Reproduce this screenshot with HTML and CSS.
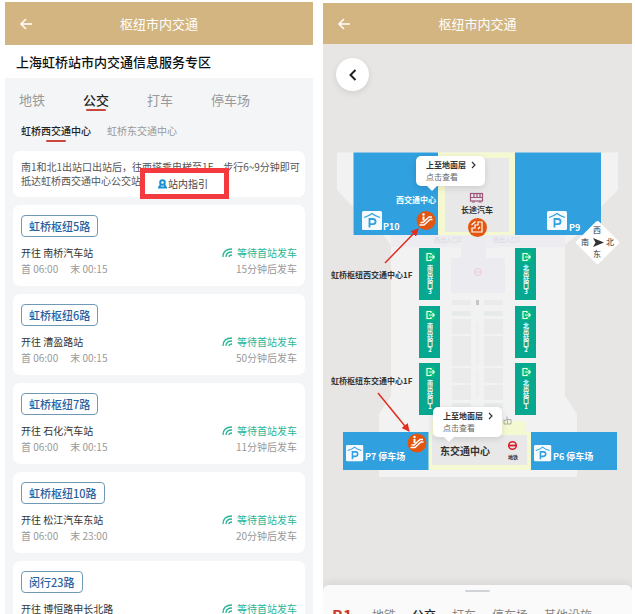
FILE: index.html
```html
<!DOCTYPE html>
<html lang="zh-CN">
<head>
    <meta charset="UTF-8">
    <meta name="viewport" content="width=device-width, initial-scale=1.0">
    <title>枢纽市内交通</title>
    <link rel="stylesheet" href="styles.css">
</head>
<body>

    <main class="page page-list">
        <header class="header">
            <button class="back" aria-label="返回">
                <svg width="14" height="14" viewBox="0 0 14 14"><path d="M13 7H2M7 2L2 7l5 5"/></svg>
            </button>
            <h1>枢纽市内交通</h1>
        </header>
        <h2 class="zone-title">上海虹桥站市内交通信息服务专区</h2>

        <div class="content">
            <nav class="tabs">
                <button>地铁</button>
                <button class="active">公交</button>
                <button>打车</button>
                <button>停车场</button>
            </nav>
            <nav class="subtabs">
                <button class="active">虹桥西交通中心</button>
                <button>虹桥东交通中心</button>
            </nav>

            <div class="card notice">
                <p>南1和北1出站口出站后，往西塔乘电梯至1F，步行6~9分钟即可<br>抵达虹桥西交通中心公交站</p>
                <a href="#map" class="guide">
                    <svg width="9" height="10" viewBox="0 0 9 10"><circle cx="4.500" cy="3.500" r="2.300"/><path d="M2.500 6L1 8.500h7L6.500 6"/></svg>
                    站内指引
                </a>
            </div>

            <section class="card route">
                <h3>虹桥枢纽5路</h3>
                <div class="row"><span>开往 南桥汽车站</span><span class="wait"><svg class="signal" viewBox="0 0 11 10"><path d="M1 9Q1 1 10 1M4 9Q4 4 10 4M7 9Q7 7 10 7"/></svg>等待首站发车</span></div>
                <div class="row time"><span class="hours"><span>首 06:00</span><span>末 00:15</span></span><span>15分钟后发车</span></div>
            </section>
            <section class="card route">
                <h3>虹桥枢纽6路</h3>
                <div class="row"><span>开往 漕盈路站</span><span class="wait"><svg class="signal" viewBox="0 0 11 10"><path d="M1 9Q1 1 10 1M4 9Q4 4 10 4M7 9Q7 7 10 7"/></svg>等待首站发车</span></div>
                <div class="row time"><span class="hours"><span>首 06:00</span><span>末 00:15</span></span><span>50分钟后发车</span></div>
            </section>
            <section class="card route">
                <h3>虹桥枢纽7路</h3>
                <div class="row"><span>开往 石化汽车站</span><span class="wait"><svg class="signal" viewBox="0 0 11 10"><path d="M1 9Q1 1 10 1M4 9Q4 4 10 4M7 9Q7 7 10 7"/></svg>等待首站发车</span></div>
                <div class="row time"><span class="hours"><span>首 06:00</span><span>末 00:15</span></span><span>11分钟后发车</span></div>
            </section>
            <section class="card route">
                <h3>虹桥枢纽10路</h3>
                <div class="row"><span>开往 松江汽车东站</span><span class="wait"><svg class="signal" viewBox="0 0 11 10"><path d="M1 9Q1 1 10 1M4 9Q4 4 10 4M7 9Q7 7 10 7"/></svg>等待首站发车</span></div>
                <div class="row time"><span class="hours"><span>首 06:00</span><span>末 23:00</span></span><span>20分钟后发车</span></div>
            </section>
            <section class="card route">
                <h3>闵行23路</h3>
                <div class="row"><span>开往 博恒路申长北路</span><span class="wait"><svg class="signal" viewBox="0 0 11 10"><path d="M1 9Q1 1 10 1M4 9Q4 4 10 4M7 9Q7 7 10 7"/></svg>等待首站发车</span></div>
            </section>
        </div>
    </main>

    <section class="page page-map" id="map">
        <header class="header">
            <button class="back" aria-label="返回">
                <svg width="14" height="14" viewBox="0 0 14 14"><path d="M13 7H2M7 2L2 7l5 5"/></svg>
            </button>
            <h1>枢纽市内交通</h1>
        </header>

        <div class="map">
            <button class="round-back" aria-label="返回地图">
                <svg width="10" height="14" viewBox="0 0 10 14"><path d="M7.500 2L2.500 7l5 5"/></svg>
            </button>
            <div class="canvas">
                <svg class="plan" width="309" height="540" viewBox="323 45 309 540">
                    <defs>
                        <g id="parking">
                            <rect width="20" height="19" rx="1.500" fill="#f4faff"/>
                            <path d="M2 6.500Q7 5 10 2.500Q13 5 18 6.500" fill="none" stroke="#31a0df" stroke-width="1.200"/>
                            <path d="M7.500 16.500V8h3.500a2.500 2.500 0 0 1 0 5.200H7.500" fill="none" stroke="#31a0df" stroke-width="1.800"/>
                        </g>
                        <g id="escalator">
                            <circle r="9.500" fill="#e2560f"/>
                            <path d="M-6.500 4.500h4.500L4-1h2.500M-5.500 2h2.500L3-3.500h3" fill="none" stroke="#fff" stroke-width="1.500"/>
                            <path d="M-2.500-4v4" stroke="#fff" stroke-width="2"/>
                            <circle cx="-2.500" cy="-6" r="1.200" fill="#fff"/>
                        </g>
                        <g id="exit">
                            <rect width="21" height="52" fill="#06a88f"/>
                            <rect x="6" y="4" width="10" height="10" rx="2" fill="#0bbd79"/>
                            <path d="M12 7V5.500H8v7h4V11M10 9h5M13.500 7.200L15.300 9l-1.800 1.800" fill="none" stroke="#e8fff5" stroke-width="1.200"/>
                        </g>
                        <marker id="tip" viewBox="0 0 8 8" refX="7" refY="4" markerWidth="8" markerHeight="8" markerUnits="userSpaceOnUse" orient="auto">
                            <path d="M0 0l8 4-8 4z" fill="#e32d20"/>
                        </marker>
                    </defs>

                    <!-- building outline -->
                    <path d="M337 152.500h281V190l-17 17v28h-24l-12 10v151l12 18v63H379v-63l12-18V245l-8-10h-30v-28l-16-17z" fill="#f2f2f3"/>
                    <path d="M391 235h174v12H391z" fill="#ececf1"/>
                    <path d="M461 236h25v22h19v35h-54v-35h10z" fill="#ebebf0"/>
                    <path d="M451 242h12v6h-12zM486 242h14v6h-14z" fill="#eeedf0"/>
                    <g fill="#eaebea">
                        <path d="M452 300h19v5h-19zM484 300h19v5h-19z"/>
                        <path d="M452 311h19v5h-19zM484 311h19v5h-19z" fill="#e6eae8"/>
                        <path d="M452 319h19v15h-19zM484 319h19v15h-19zM452 336h19v30h-19zM484 336h19v30h-19z"/>
                        <path d="M452 368h19v15h-19zM484 368h19v15h-19zM452 385h19v15h-19zM484 385h19v15h-19z"/>
                        <path d="M452 403h19v5h-19zM484 403h19v5h-19z" fill="#e6eae8"/>
                        <path d="M476 322h3v42h-3zM476 370h3v26h-3z" fill="#eeeeee"/>
                    </g>
                    <path d="M476 300h3v5h-3z" fill="#c5c5ca"/>
                    <circle cx="478" cy="272" r="3.500" fill="none" stroke="#f2cdd6"/>
                    <path d="M475 272h6" stroke="#f2cdd6"/>
                    <text x="434" y="242" class="faint">西出入口2</text>
                    <text x="493" y="242" class="faint">西出入口1</text>

                    <!-- west centre -->
                    <rect x="438" y="152.500" width="77" height="82.500" fill="#f5f9d2"/>
                    <rect x="445" y="158" width="64" height="74" fill="#e9e8e8"/>
                    <rect x="353.500" y="152.500" width="84.500" height="82.500" fill="#31a0df"/>
                    <rect x="515" y="152.500" width="86" height="82.500" fill="#31a0df"/>
                    <use href="#parking" x="362" y="211"/>
                    <use href="#parking" x="547" y="211"/>
                    <text x="396" y="203" class="white">西交通中心</text>
                    <text x="383" y="230" class="white code">P10</text>
                    <text x="569" y="231" class="white code">P9</text>
                    <g fill="none" stroke="#9c5578" stroke-width="1.200">
                        <rect x="470.500" y="193.500" width="12" height="7.500"/>
                        <path d="M471 197.500h11M474 194v3M477 194v3M480 194v3"/>
                        <path d="M472 202h3M478.500 202h3"/>
                    </g>
                    <text x="461" y="213" class="dark">长途汽车</text>
                    <circle cx="477.500" cy="227.500" r="9.500" fill="#e2560f"/>
                    <path d="M472 232v-4h3v-3h3v-3h4v10zM471.500 225l4-3.500M478 229l2-2" fill="none" stroke="#fff" stroke-width="1.200"/>
                    <use href="#escalator" x="426" y="220.500"/>

                    <!-- station exits -->
                    <use href="#exit" x="419" y="248"/>
                    <use href="#exit" x="419" y="306"/>
                    <use href="#exit" x="419" y="363"/>
                    <use href="#exit" x="515" y="248"/>
                    <use href="#exit" x="515" y="306"/>
                    <use href="#exit" x="515" y="363"/>
                    <text x="430" y="265" class="vertical">南出站口3</text>
                    <text x="430" y="323" class="vertical">南出站口2</text>
                    <text x="430" y="380" class="vertical">南出站口1</text>
                    <text x="526" y="265" class="vertical">北出站口3</text>
                    <text x="526" y="323" class="vertical">北出站口2</text>
                    <text x="526" y="380" class="vertical">北出站口1</text>

                    <!-- east centre -->
                    <path d="M431 421h94v11h6v38H428v-38h3z" fill="#f5f9d2"/>
                    <rect x="432" y="435" width="95" height="30" fill="#e9e8e8"/>
                    <rect x="343" y="432" width="85.500" height="38" fill="#31a0df"/>
                    <rect x="531" y="432" width="86" height="38" fill="#31a0df"/>
                    <g transform="translate(346 445) scale(.86)"><use href="#parking"/></g>
                    <g transform="translate(534 445) scale(.86)"><use href="#parking"/></g>
                    <text x="365" y="460" class="white code">P7 停车场</text>
                    <text x="553" y="460" class="white code">P6 停车场</text>
                    <text x="440" y="455" class="dark big">东交通中心</text>
                    <circle cx="512.500" cy="445.500" r="3.800" fill="none" stroke="#d81e2a" stroke-width="1.500"/>
                    <path d="M508 445.500h9" stroke="#d81e2a" stroke-width="1.800"/>
                    <text x="508" y="459" class="dark small">地铁</text>
                    <path d="M504 419.500v4.500h7v-4.500h-3.500v4M507 416.500v3M504 421l3-1.500" fill="none" stroke="#999" stroke-width=".8"/>
                    <use href="#escalator" x="417" y="443"/>

                    <!-- callouts -->
                    <text x="331" y="278" class="dark">虹桥枢纽西交通中心1F</text>
                    <text x="331" y="384" class="dark">虹桥枢纽东交通中心1F</text>
                    <path d="M385 263L418 229" stroke="#e32d20" stroke-width="1.500" marker-end="url(#tip)"/>
                    <path d="M378 393L409 431" stroke="#e32d20" stroke-width="1.500" marker-end="url(#tip)"/>

                    <!-- compass -->
                    <path d="M597.500 223l19.500 19.500L597.500 262 578 242.500z" fill="#fff" stroke="#fff" stroke-width="4" stroke-linejoin="round"/>
                    <path d="M593 238l11 4.500-11 4.500 2.500-4.500z" fill="#333"/>
                    <text x="593" y="233" class="compass">西</text>
                    <text x="581" y="245" class="compass">南</text>
                    <text x="606" y="245" class="compass">北</text>
                    <text x="593" y="257" class="compass">东</text>
                </svg>
                <button class="bubble west"><strong>上至地面层 <svg width="5" height="8" viewBox="0 0 5 8"><path d="M1 1l3 3-3 3"/></svg></strong><span>点击查看</span></button>
                <button class="bubble east"><strong>上至地面层 <svg width="5" height="8" viewBox="0 0 5 8"><path d="M1 1l3 3-3 3"/></svg></strong><span>点击查看</span></button>
            </div>
        </div>

        <div class="sheet">
            <div class="handle"></div>
            <nav class="sheet-tabs">
                <strong>B1</strong>
                <button>地铁</button>
                <button class="active">公交</button>
                <button>打车</button>
                <button>停车场</button>
                <button>其他设施</button>
            </nav>
        </div>
    </section>

</body>
</html>
```
FILE: styles.css
```css
* {
    box-sizing: border-box;
}
body {
    margin: 0;
    padding: 2px 3px 0 5px;
    height: 100vh;
    display: grid;
    grid-template-columns: 308fr 309fr;
    grid-template-rows: 100%;
    gap: 10px;
    overflow: hidden;
    background: #fff;
    font-family: "Noto Sans CJK SC", sans-serif;
    font-size: 10px;
    color: #333;
}
h1, h2, h3, p {
    margin: 0;
    font-weight: normal;
}
button {
    margin: 0;
    padding: 0;
    border: none;
    background: none;
    font: inherit;
    color: inherit;
    cursor: pointer;
}
svg {
    display: block;
}
.page {
    display: flex;
    flex-direction: column;
    min-width: 0;
    overflow: hidden;
}
.page-list {
    background: #f4f5f7;
}
.page-map {
    margin-top: 1px;
    background: #e8e6e5;
}

/* header */
.header {
    display: grid;
    grid-template-columns: 40px 1fr 40px;
    align-items: center;
    flex: none;
    height: 43px;
    background: #d3b581;
    color: #fff;
}
.page-map .header {
    height: 41px;
    margin-bottom: 1px;
}
.header h1 {
    font-size: 13px;
    line-height: 20px;
    text-align: center;
}
.back {
    padding-left: 14px;
}
.back svg {
    fill: none;
    stroke: #fff;
    stroke-width: 1.5;
}
.zone-title {
    flex: none;
    padding: 0 11px;
    background: #fff;
    font-size: 13px;
    font-weight: 500;
    line-height: 33px;
    color: #111;
}

/* bus list */
.content {
    display: flex;
    flex-direction: column;
    gap: 8px;
    padding: 12px 8px 0;
}
.tabs, .subtabs {
    display: flex;
    color: #999;
}
.tabs {
    gap: 38px;
    padding-left: 6px;
    font-size: 13px;
    line-height: 20px;
}
.subtabs {
    gap: 16px;
    padding: 3px 0 2px 8px;
    line-height: 20px;
}
.tabs button, .subtabs button {
    position: relative;
}
.tabs .active, .subtabs .active {
    color: #222;
    font-weight: 500;
}
.tabs .active::after, .subtabs .active::after {
    content: "";
    position: absolute;
    left: 50%;
    bottom: -1px;
    width: 20px;
    height: 2px;
    margin-left: -10px;
    border-radius: 1px;
    background: #c9473f;
}
.card {
    background: #fff;
    border-radius: 7px;
}
.notice {
    position: relative;
    padding: 9px 8px;
    line-height: 14px;
    white-space: nowrap;
    color: #555;
}
.guide {
    position: absolute;
    left: 127px;
    top: 17px;
    display: flex;
    align-items: center;
    justify-content: center;
    gap: 1px;
    width: 89px;
    height: 31px;
    padding-right: 3px;
    border: 5px solid #f23a3f;
    background: #fff;
    color: #444;
    text-decoration: none;
}
.guide svg {
    fill: none;
    stroke: #1c8fd0;
    stroke-width: 2;
}
.route {
    padding: 10px 8px 9px;
}
.route h3 {
    width: fit-content;
    margin-bottom: 8px;
    padding: 0 7px;
    border: 1px solid #7099b5;
    border-radius: 4px;
    font-size: 11px;
    font-weight: 500;
    line-height: 20px;
    color: #2a5f9e;
}
.row {
    display: flex;
    justify-content: space-between;
    line-height: 16px;
}
.time {
    color: #999;
}
.hours {
    display: flex;
    gap: 12px;
}
.wait {
    display: flex;
    align-items: center;
    gap: 4px;
    color: #2bb594;
}
.signal {
    width: 11px;
    height: 10px;
    fill: none;
    stroke: #2bb594;
    stroke-width: 1.3;
}

/* station map */
.map {
    position: relative;
    flex: 1;
    min-height: 0;
    overflow: hidden;
}
.round-back {
    position: absolute;
    z-index: 1;
    left: 13px;
    top: 13px;
    display: flex;
    align-items: center;
    justify-content: center;
    width: 33px;
    height: 33px;
    border-radius: 50%;
    background: #fff;
    box-shadow: 0 2px 6px rgba(0, 0, 0, 0.1);
}
.round-back svg {
    fill: none;
    stroke: #222;
    stroke-width: 2;
}
.canvas {
    position: relative;
    width: 309px;
    margin: 0 auto;
}
.white {
    font-size: 8px;
    font-weight: bold;
    fill: #fff;
}
.code {
    font-size: 9px;
}
.dark {
    font-size: 8px;
    font-weight: bold;
    fill: #333;
}
.big {
    font-size: 10px;
}
.small {
    font-size: 5px;
}
.faint {
    font-size: 6px;
    fill: #d8d8e0;
}
.compass {
    font-size: 8px;
    fill: #333;
}
.vertical {
    font-size: 6px;
    font-weight: bold;
    fill: #fff;
    writing-mode: vertical-rl;
    text-orientation: upright;
}
.bubble {
    position: absolute;
    display: flex;
    flex-direction: column;
    justify-content: center;
    width: 69px;
    height: 30px;
    padding-left: 10px;
    border-radius: 5px;
    background: #fff;
    box-shadow: 0 2px 6px rgba(0, 0, 0, 0.12);
    font-size: 8px;
    line-height: 12px;
    text-align: left;
    color: #666;
}
.bubble::after {
    content: "";
    position: absolute;
    left: 11px;
    top: 100%;
    border: 5px solid transparent;
    border-top-color: #fff;
    border-bottom: none;
}
.bubble strong {
    display: flex;
    align-items: center;
    gap: 5px;
    color: #333;
}
.bubble svg {
    fill: none;
    stroke: #333;
    stroke-width: 1.2;
}
.west {
    left: 93px;
    top: 111px;
}
.east {
    left: 110px;
    top: 362px;
}

/* bottom sheet */
.sheet {
    flex: none;
    height: 29px;
    padding: 5px 9px 0;
    overflow: hidden;
    border-radius: 6px 6px 0 0;
    background: #fafafa;
    box-shadow: 0 -2px 8px rgba(0, 0, 0, 0.08);
}
.handle {
    width: 25px;
    height: 2px;
    margin: 0 auto 13px;
    border-radius: 1px;
    background: #d0d4d8;
}
.sheet-tabs {
    display: flex;
    align-items: center;
    gap: 16px;
    height: 20px;
    font-size: 12px;
    line-height: 20px;
    white-space: nowrap;
    color: #888;
}
.sheet-tabs strong {
    width: 24px;
    font-size: 16px;
    color: #cf3a2b;
}
.sheet-tabs .active {
    color: #222;
    font-weight: 500;
}
```
